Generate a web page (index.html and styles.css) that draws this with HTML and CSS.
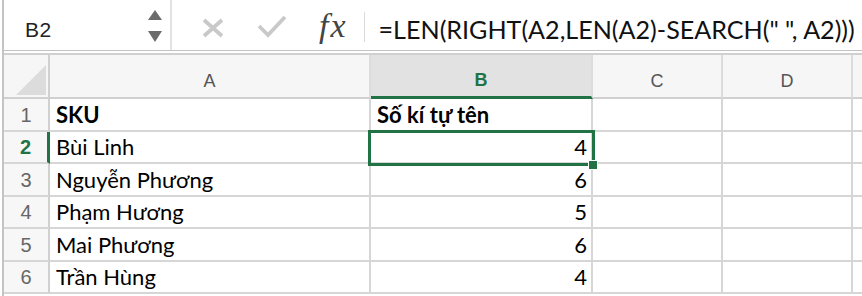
FILE: index.html
```html
<!DOCTYPE html>
<html>
<head>
    <title>Sheet</title>
    <link rel="stylesheet" href="styles.css">
</head>
<body>

<div class="app">
    <!-- name box + formula bar -->
    <div class="toolbar">
        <div class="namebox">
            <span class="ref">B2</span>
            <div class="spin">
                <span class="up"></span>
                <span class="down"></span>
            </div>
        </div>
        <div class="formula">
            <svg class="icon-x" width="24" height="20" viewBox="0 0 24 20">
                <path d="M3 2 L21 18 M21 2 L3 18" stroke="#c9c9c9" stroke-width="3.8" fill="none"/>
            </svg>
            <svg class="icon-check" width="30" height="24" viewBox="0 0 30 24">
                <path d="M2 12 L11 21 L28 3" stroke="#c9c9c9" stroke-width="3.8" fill="none"/>
            </svg>
            <span class="fx">fx</span>
            <span class="sep"></span>
            <span class="expr">=LEN(RIGHT(A2,LEN(A2)-SEARCH(" ", A2)))</span>
        </div>
    </div>
    <div class="divider"></div>

    <!-- grid -->
    <div class="sheet">
        <div class="corner"><span class="tri"></span></div>
        <div class="colhead">A</div>
        <div class="colhead active">B</div>
        <div class="colhead">C</div>
        <div class="colhead">D</div>
        <div class="colhead"></div>

        <div class="rowhead">1</div>
        <div class="cell bold">SKU</div>
        <div class="cell bold">Số kí tự tên</div>
        <div class="cell"></div><div class="cell"></div><div class="cell"></div>

        <div class="rowhead active">2</div>
        <div class="cell">Bùi Linh</div>
        <div class="cell num sel">4</div>
        <div class="cell"></div><div class="cell"></div><div class="cell"></div>

        <div class="rowhead">3</div>
        <div class="cell">Nguyễn Phương</div>
        <div class="cell num">6</div>
        <div class="cell"></div><div class="cell"></div><div class="cell"></div>

        <div class="rowhead">4</div>
        <div class="cell">Phạm Hương</div>
        <div class="cell num">5</div>
        <div class="cell"></div><div class="cell"></div><div class="cell"></div>

        <div class="rowhead">5</div>
        <div class="cell">Mai Phương</div>
        <div class="cell num">6</div>
        <div class="cell"></div><div class="cell"></div><div class="cell"></div>

        <div class="rowhead">6</div>
        <div class="cell">Trần Hùng</div>
        <div class="cell num">4</div>
        <div class="cell"></div><div class="cell"></div><div class="cell"></div>
    </div>
</div>

</body>
</html>
```

FILE: styles.css
```css
body {
    margin: 0;
    background: #fff;
    overflow: hidden;
    font-family: "Liberation Sans", Arial, sans-serif;
}
.app {
    margin-left: 2px;
    border-left: 2px solid #c4c4c4;
    height: 296px;
}
.toolbar {
    display: flex;
    height: 50px;
    border-bottom: 1px solid #c2c2c2;
}
.namebox {
    width: 168px;
    border-right: 2px solid #e2e2e2;
    display: flex;
    align-items: center;
    box-sizing: border-box;
}
.ref {
    font-size: 21px;
    color: #222;
    margin-left: 21px;
    margin-top: 9px;
    letter-spacing: 0.5px;
    flex: 1;
}
.spin {
    display: flex;
    flex-direction: column;
    gap: 11px;
    margin-right: 8px;
    margin-top: 2px;
}
.spin span {
    width: 0;
    height: 0;
    border-left: 7px solid transparent;
    border-right: 7px solid transparent;
}
.spin .up {
    border-bottom: 10px solid #6b6b6b;
}
.spin .down {
    border-top: 11px solid #6b6b6b;
}
.formula {
    flex: 1;
    display: flex;
    align-items: center;
}
.icon-x {
    margin-left: 29px;
    margin-top: 5px;
}
.icon-check {
    margin-left: 32px;
    margin-top: 1px;
}
.fx {
    font-family: "Liberation Serif", serif;
    font-style: italic;
    font-size: 34px;
    color: #444;
    margin-left: 32px;
    margin-top: 2px;
    letter-spacing: 2px;
}
.sep {
    width: 1px;
    height: 30px;
    background: #dadada;
    margin-left: 16px;
    margin-top: 4px;
}
.expr {
    font-family: Lato, sans-serif;
    font-size: 25.1px;
    color: #111;
    margin-left: 14px;
    margin-top: 7px;
    white-space: nowrap;
}
.divider {
    height: 2px;
    border-bottom: 2px solid #d0d0d0;
}
.sheet {
    display: grid;
    grid-template-columns: 46px 321px 222px 130px 130px 1fr;
    grid-template-rows: 44px repeat(6, 32.5px);
}
.corner {
    background: #f6f6f6;
    border-right: 2px solid #d0d0d0;
    border-bottom: 2px solid #d0d0d0;
    position: relative;
}
.tri {
    position: absolute;
    right: 2px;
    bottom: 2px;
    width: 0;
    height: 0;
    border-left: 30px solid transparent;
    border-bottom: 30px solid #dcdcdc;
}
.colhead {
    background: #f6f6f6;
    border-right: 2px solid #dcdcdc;
    border-bottom: 2px solid #d0d0d0;
    display: flex;
    align-items: center;
    justify-content: center;
    font-size: 18px;
    color: #555;
    padding-top: 10px;
}
.colhead.active {
    background: #e2e2e2;
    border-bottom: 3px solid #217346;
    color: #217346;
    font-weight: bold;
}
.rowhead {
    background: #f7f7f7;
    border-right: 2px solid #d0d0d0;
    border-bottom: 2px solid #d6d6d6;
    display: flex;
    align-items: flex-end;
    justify-content: center;
    padding-bottom: 3px;
    font-size: 20px;
    color: #666;
}
.rowhead.active {
    border-right: 3px solid #217346;
    color: #217346;
    font-weight: bold;
}
.cell {
    border-right: 2px solid #d6d6d6;
    border-bottom: 2px solid #d6d6d6;
    display: flex;
    align-items: flex-end;
    padding: 0 6px 2px 6px;
    font-family: Lato, sans-serif;
    font-size: 22px;
    color: #000;
    white-space: nowrap;
}
.cell.bold {
    font-weight: bold;
}
.cell.num {
    justify-content: flex-end;
    padding-right: 4px;
}
.cell.sel {
    position: relative;
}
.cell.sel::before {
    content: "";
    position: absolute;
    left: -3px;
    top: -2px;
    right: -4px;
    bottom: -4px;
    border: 3px solid #217346;
}
.cell.sel::after {
    content: "";
    position: absolute;
    right: -7px;
    bottom: -8px;
    width: 8px;
    height: 8px;
    background: #217346;
    border: 1px solid #fff;
}
```
